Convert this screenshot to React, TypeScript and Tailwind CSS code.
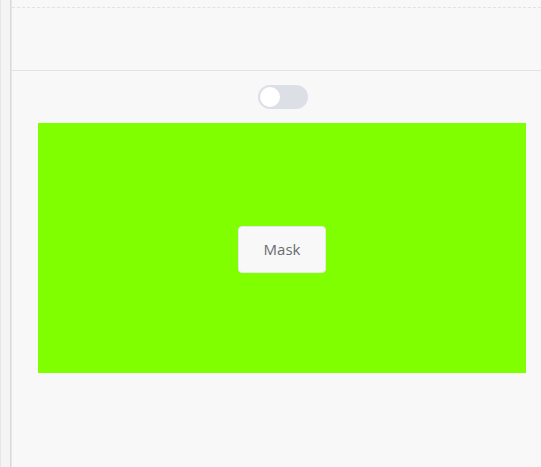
import { useState } from "react";

const App = () => {
  const [on, setOn] = useState(false);
  return (
    <div
      className="flex h-[467px] w-full overflow-hidden bg-[#f8f8f8] text-[#606266]"
      style={{ fontFamily: '"Open Sans", "Noto Sans", sans-serif' }}
    >
      {/* left rail */}
      <div className="h-full w-[10px] shrink-0 border-l border-[#e6e6e6] bg-[#f4f4f4]" />
      <div className="h-full w-[2px] shrink-0 bg-gradient-to-r from-[#d4d4d4] to-[#ececec]" />

      <div className="flex min-w-0 flex-1 flex-col pt-[7px]">
        {/* header */}
        <div className="border-t border-dashed border-[#e2e2e2]" />
        <div className="h-[63px] shrink-0 border-b border-[#e1e1ea]" />

        {/* toggle */}
        <div className="flex pl-[246px] pt-[14px]">
          <button
            className={`relative h-[24px] w-[50px] rounded-full ${on ? "bg-[#409eff]" : "bg-[#dcdfe6]"}`}
            onClick={() => setOn(!on)}
          >
            <span
              className={`absolute top-[2px] h-[20px] w-[20px] rounded-full bg-white ${on ? "left-[28px]" : "left-[2px]"}`}
            />
          </button>
        </div>

        {/* masked area */}
        <div className="pl-[26px] pt-[14px]">
          <div className="flex h-[250px] w-[488px] items-center justify-center bg-[#7fff00]">
            <button className="mt-[2px] h-[47px] w-[88px] rounded-[4px] border border-[#e4e7ed] bg-[#f8f8f8] text-[15px] text-[#6a6c70]">
              Mask
            </button>
          </div>
        </div>
      </div>
    </div>
  );
};

export default App;
